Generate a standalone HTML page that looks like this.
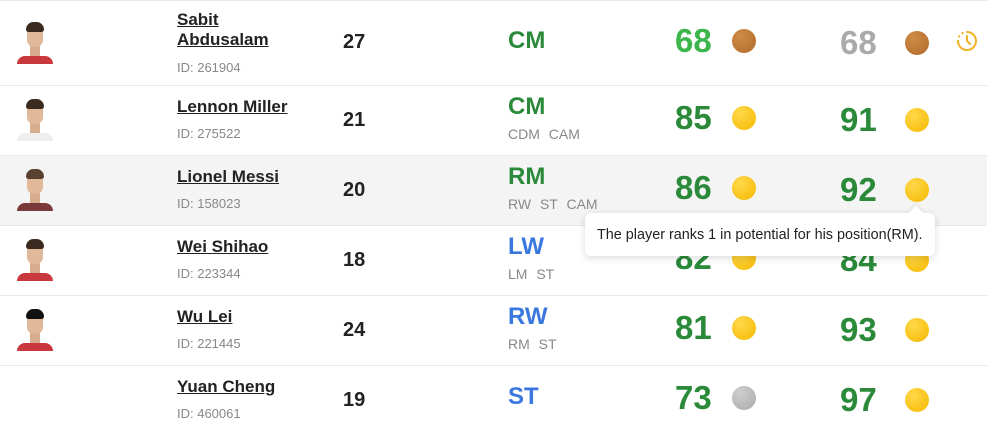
<!DOCTYPE html>
<html><head><style>
body{margin:0;width:987px;height:428px;overflow:hidden;background:#fff;font-family:"Liberation Sans",Arial,sans-serif;position:relative}
.a{position:absolute;white-space:nowrap}
.row{position:absolute;left:0;width:987px;border-top:1px solid #e8e8e8}
.nm{font-size:17px;font-weight:bold;color:#222;text-decoration:underline;line-height:20px}
.id{font-size:13px;color:#888;line-height:16px}
.age{font-size:20px;font-weight:bold;color:#222;line-height:22px}
.pos{font-size:24px;font-weight:bold;line-height:26px}
.g{color:#2a8a3a}.b{color:#3a78e0}
.sub{font-size:14px;color:#888;line-height:16px;word-spacing:5px}
.rt{font-size:33px;font-weight:bold;line-height:34px}
.dot{position:absolute;width:24px;height:24px;border-radius:50%}
.gold{background:radial-gradient(circle at 35% 30%,#ffd84a,#f5b800)}
.br{background:radial-gradient(circle at 35% 30%,#cf8a45,#b06a2c)}
.sl{background:radial-gradient(circle at 35% 30%,#cfcfcf,#a9a9a9)}
.av{position:absolute;width:40px;height:46px}
.av .h{position:absolute;left:11px;top:2px;width:18px;height:10px;border-radius:9px 9px 3px 3px;background:#3a2a20}
.av .f{position:absolute;left:12px;top:5px;width:16px;height:22px;border-radius:7px;background:#e0b89a}
.av .s{position:absolute;left:2px;top:36px;width:36px;height:8px;border-radius:8px 8px 0 0;background:#c8383c}
.av .n{position:absolute;left:15px;top:24px;width:10px;height:14px;background:#d8ad8e}
</style></head><body>
<div class="row" style="top:0;height:85px"></div>
<div class="row" style="top:85px;height:70px"></div>
<div class="row" style="top:155px;height:70px;background:#f4f4f4"></div>
<div class="row" style="top:225px;height:70px"></div>
<div class="row" style="top:295px;height:70px"></div>
<div class="row" style="top:365px;height:63px"></div>

<div class="av" style="left:15px;top:20px"><div class="n"></div><div class="s"></div><div class="f"></div><div class="h"></div></div>
<div class="av" style="left:15px;top:97px"><div class="n"></div><div class="s" style="background:#eee"></div><div class="f"></div><div class="h"></div></div>
<div class="av" style="left:15px;top:167px"><div class="n"></div><div class="s" style="background:#7a3a3a"></div><div class="f"></div><div class="h" style="background:#5a4030"></div></div>
<div class="av" style="left:15px;top:237px"><div class="n"></div><div class="s"></div><div class="f"></div><div class="h"></div></div>
<div class="av" style="left:15px;top:307px"><div class="n"></div><div class="s"></div><div class="f"></div><div class="h" style="background:#111"></div></div>

<div class="a nm" style="left:177px;top:10px">Sabit<br>Abdusalam</div>
<div class="a id" style="left:177px;top:60px">ID: 261904</div>
<div class="a age" style="left:343px;top:31px">27</div>
<div class="a pos g" style="left:508px;top:28px">CM</div>
<div class="a rt" style="left:675px;top:24px;color:#3cb54a">68</div>
<div class="dot br" style="left:732px;top:29px"></div>
<div class="a rt" style="left:840px;top:26px;color:#aaa">68</div>
<div class="dot br" style="left:905px;top:31px"></div>
<svg class="a" style="left:955px;top:29px" width="24" height="24" viewBox="0 0 24 24" fill="none" stroke="#f0b429" stroke-width="2" stroke-linecap="round"><path d="M12 3a9 9 0 1 1-9 9" /><path d="M3 12v-.1M4.2 7.5v0M7.5 4.2v0" stroke-width="2.4"/><path d="M12 7v5l3 3"/></svg>

<div class="a nm" style="left:177px;top:97px">Lennon Miller</div>
<div class="a id" style="left:177px;top:126px">ID: 275522</div>
<div class="a age" style="left:343px;top:109px">21</div>
<div class="a pos g" style="left:508px;top:94px">CM</div>
<div class="a sub" style="left:508px;top:126px">CDM CAM</div>
<div class="a rt" style="left:675px;top:101px;color:#2a8a3a">85</div>
<div class="dot gold" style="left:732px;top:106px"></div>
<div class="a rt" style="left:840px;top:103px;color:#2a8a3a">91</div>
<div class="dot gold" style="left:905px;top:108px"></div>

<div class="a nm" style="left:177px;top:167px">Lionel Messi</div>
<div class="a id" style="left:177px;top:196px">ID: 158023</div>
<div class="a age" style="left:343px;top:179px">20</div>
<div class="a pos g" style="left:508px;top:164px">RM</div>
<div class="a sub" style="left:508px;top:196px">RW ST CAM</div>
<div class="a rt" style="left:675px;top:171px;color:#2a8a3a">86</div>
<div class="dot gold" style="left:732px;top:176px"></div>
<div class="a rt" style="left:840px;top:173px;color:#2a8a3a">92</div>
<div class="dot gold" style="left:905px;top:178px"></div>

<div class="a nm" style="left:177px;top:237px">Wei Shihao</div>
<div class="a id" style="left:177px;top:266px">ID: 223344</div>
<div class="a age" style="left:343px;top:249px">18</div>
<div class="a pos b" style="left:508px;top:234px">LW</div>
<div class="a sub" style="left:508px;top:266px">LM ST</div>
<div class="a rt" style="left:675px;top:241px;color:#2a8a3a">82</div>
<div class="dot gold" style="left:732px;top:246px"></div>
<div class="a rt" style="left:840px;top:243px;color:#2a8a3a">84</div>
<div class="dot gold" style="left:905px;top:248px"></div>

<div class="a nm" style="left:177px;top:307px">Wu Lei</div>
<div class="a id" style="left:177px;top:336px">ID: 221445</div>
<div class="a age" style="left:343px;top:319px">24</div>
<div class="a pos b" style="left:508px;top:304px">RW</div>
<div class="a sub" style="left:508px;top:336px">RM ST</div>
<div class="a rt" style="left:675px;top:311px;color:#2a8a3a">81</div>
<div class="dot gold" style="left:732px;top:316px"></div>
<div class="a rt" style="left:840px;top:313px;color:#2a8a3a">93</div>
<div class="dot gold" style="left:905px;top:318px"></div>

<div class="a nm" style="left:177px;top:377px">Yuan Cheng</div>
<div class="a id" style="left:177px;top:406px">ID: 460061</div>
<div class="a age" style="left:343px;top:389px">19</div>
<div class="a pos b" style="left:508px;top:384px">ST</div>
<div class="a rt" style="left:675px;top:381px;color:#2a8a3a">73</div>
<div class="dot sl" style="left:732px;top:386px"></div>
<div class="a rt" style="left:840px;top:383px;color:#2a8a3a">97</div>
<div class="dot gold" style="left:905px;top:388px"></div>

<div class="a" style="left:585px;top:213px;width:350px;height:43px;background:#fff;border-radius:6px;box-shadow:0 2px 8px rgba(0,0,0,0.15)"></div>
<div class="a" style="left:911px;top:208px;width:10px;height:10px;background:#fff;transform:rotate(45deg);box-shadow:-2px -2px 3px rgba(0,0,0,0.05)"></div>
<div class="a" style="left:597px;top:226px;font-size:14.4px;color:#222;line-height:18px">The player ranks 1 in potential for his position(RM).</div>
</body></html>
